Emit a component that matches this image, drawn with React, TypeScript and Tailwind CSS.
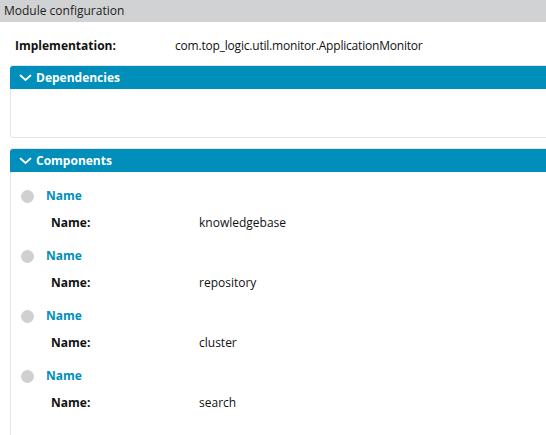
import React from 'react';

const items = ['knowledgebase', 'repository', 'cluster', 'search'];

const Chevron = () => (
    <svg width="13" height="8" viewBox="0 0 13 8" className="shrink-0">
        <path d="M1.5 1.5 L6.5 6 L11.5 1.5" fill="none" stroke="white" strokeWidth="1.8" strokeLinecap="round" />
    </svg>
);

const PanelHeader = ({ title }: { title: string }) => (
    <div className="h-[23px] bg-[#008fba] rounded-tl-[3px] flex items-center pl-[9px] gap-[4px]">
        <Chevron />
        <span className="text-[12px] font-bold text-white">{title}</span>
    </div>
);

export default function App() {
    return (
        <div className="w-[546px] h-[435px] bg-white overflow-hidden font-['Open_Sans',sans-serif] text-[12px] text-[#111]">
            {/* Title bar */}
            <div className="h-[22px] bg-[#d1d2d4] flex items-center pl-[4px] text-[12px] text-[#222]">
                Module configuration
            </div>

            {/* Implementation row */}
            <div className="h-[43px] flex items-center pt-[4px]">
                <span className="w-[175px] pl-[15px] font-bold">Implementation:</span>
                <span className="tracking-[-0.2px]">com.top_logic.util.monitor.ApplicationMonitor</span>
            </div>

            {/* Dependencies */}
            <div className="ml-[10px] border-t border-[#e3e3e8]">
                <PanelHeader title="Dependencies" />
                <div className="h-[49px] border-l border-b border-[#e3e3e8] rounded-bl-[4px]" />
            </div>

            {/* Components */}
            <div className="ml-[10px] mt-[10px] border-t border-[#e3e3e8]">
                <PanelHeader title="Components" />
                <div className="border-l border-[#e3e3e8] pt-[12px] pb-[20px] flex flex-col">
                    {items.map(item => (
                        <div key={item} className="h-[60px] flex flex-col">
                            <div className="h-[24px] flex items-center pl-[10px] gap-[12px]">
                                <span className="w-[13px] h-[13px] rounded-full bg-[#cfd0d2]" />
                                <span className="text-[12px] font-bold text-[#008fba]">Name</span>
                            </div>
                            <div className="h-[29px] flex items-center">
                                <span className="w-[188px] pl-[40px] font-bold">Name:</span>
                                <span>{item}</span>
                            </div>
                        </div>
                    ))}
                </div>
            </div>
        </div>
    );
}
